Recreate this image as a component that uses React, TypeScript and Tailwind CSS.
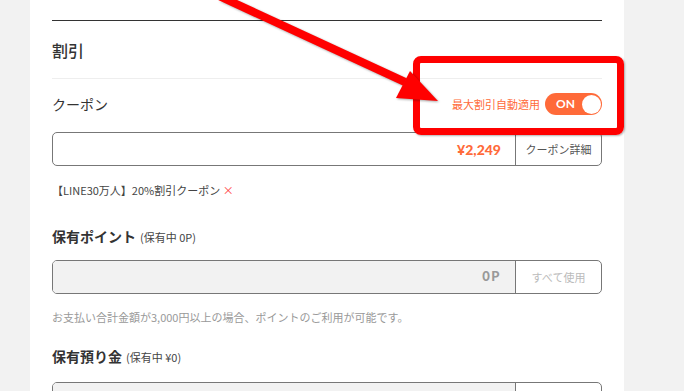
import React from "react";

const ORANGE = "text-[#ff6a39]";

function SectionLabel({ title, sub }: { title: string; sub: string }) {
  return (
    <div className="flex items-baseline h-5 leading-5">
      <span className="text-[14px] font-bold text-[#333]">{title}</span>
      <span className="ml-1 text-[11px] text-[#444]">{sub}</span>
    </div>
  );
}

export default function App() {
  return (
    <div className="relative w-[684px] h-[391px] overflow-hidden bg-[#f2f2f2] font-['Noto_Sans_CJK_JP','Noto_Sans',sans-serif]">
      <div className="ml-[30px] w-[594px] h-full bg-white px-[22px]">
        <div className="h-5" />
        <div className="border-t border-[#333]" />

        {/* 割引 */}
        <div className="h-[58px] flex items-center border-b border-[#eee]">
          <h2 className="text-[16px] font-medium text-[#333]">割引</h2>
        </div>

        {/* クーポン */}
        <div className="h-[50px] flex items-center justify-between">
          <span className="text-[14px] text-[#333]">クーポン</span>
          <div className="flex items-center gap-[5px]">
            <span className={`text-[11px] ${ORANGE}`}>最大割引自動適用</span>
            <button className="relative w-[57px] h-[22px] rounded-full bg-[#ff6a39] flex items-center pl-[11px]">
              <span className="text-[12px] text-white font-['Lato',sans-serif] font-bold">ON</span>
              <span className="absolute right-[1.5px] top-[1.5px] w-[19px] h-[19px] rounded-full bg-white" />
            </button>
          </div>
        </div>

        <div className="mt-[3px] h-[34px] flex border border-[#777] rounded-[5px] overflow-hidden">
          <div className="flex-1 flex items-center justify-end pr-[14px]">
            <span className={`text-[14px] font-black font-['Lato',sans-serif] ${ORANGE}`}>¥2,249</span>
          </div>
          <div className="w-[86px] border-l border-[#777] flex items-center justify-center text-[11px] text-[#555]">
            クーポン詳細
          </div>
        </div>

        <div className="mt-[16px] h-4 leading-4 text-[11px] text-[#444]">
          【LINE30万人】20%割引クーポン <span className="text-[#ff3b3b]">×</span>
        </div>

        {/* 保有ポイント */}
        <div className="mt-[28px]">
          <SectionLabel title="保有ポイント" sub="(保有中 0P)" />
        </div>
        <div className="mt-[14px] h-[34px] flex border border-[#777] rounded-[5px] overflow-hidden">
          <div className="flex-1 bg-[#f2f2f2] flex items-center justify-end pr-[14px]">
            <span className="text-[13px] font-black tracking-[1.5px] text-[#999] font-['Lato',sans-serif]">0P</span>
          </div>
          <div className="w-[86px] border-l border-[#777] flex items-center justify-center text-[11px] text-[#bbb]">
            すべて使用
          </div>
        </div>

        <p className="mt-[15px] h-4 leading-4 text-[11px] text-[#999]">
          お支払い合計金額が3,000円以上の場合、ポイントのご利用が可能です。
        </p>

        {/* 保有預り金 */}
        <div className="mt-[21px]">
          <SectionLabel title="保有預り金" sub="(保有中 ¥0)" />
        </div>
        <div className="mt-[16px] h-[34px] flex border border-[#777] rounded-[5px] overflow-hidden">
          <div className="flex-1 bg-[#f2f2f2]" />
          <div className="w-[86px] border-l border-[#777]" />
        </div>
      </div>

      {/* annotation */}
      <div className="absolute left-[413px] top-[56px] w-[211px] h-[79px] border-[7px] border-[#ff0000] rounded-[8px] shadow-[1px_1px_2px_rgba(0,0,0,0.3)]" />
      <svg
        className="absolute inset-0 pointer-events-none drop-shadow-[1px_1px_1px_rgba(0,0,0,0.35)]"
        width="684"
        height="391"
        viewBox="0 0 684 391"
      >
        <line x1="219" y1="-4" x2="405" y2="82" stroke="#ff0000" strokeWidth="8" />
        <polygon points="410,71 396,98 438,101" fill="#ff0000" />
      </svg>
    </div>
  );
}
